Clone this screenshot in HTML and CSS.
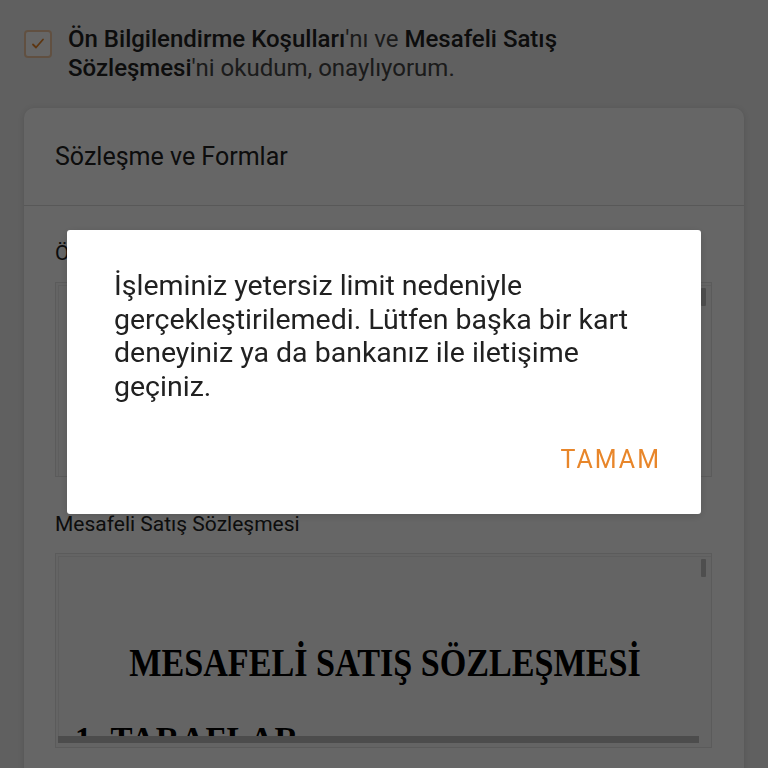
FILE: index.html
```html
<!DOCTYPE html>
<html lang="tr">
<head>
    <meta charset="UTF-8">
    <meta name="viewport" content="width=device-width, initial-scale=1.0">
    <title>Ödeme</title>
    <link rel="stylesheet" href="styles.css">
</head>
<body>

<div class="consent">
    <span class="check-box">
        <svg width="16" height="16" viewBox="0 0 16 16"><path d="M3 8.5l3 3 7-8" fill="none" stroke="#e8862a" stroke-width="1.8" stroke-linecap="round" stroke-linejoin="round"/></svg>
    </span>
    <p class="consent-text"><b>Ön Bilgilendirme Koşulları</b>'nı ve <b>Mesafeli Satış Sözleşmesi</b>'ni okudum, onaylıyorum.</p>
</div>

<div class="card">
    <div class="card-header">Sözleşme ve Formlar</div>
    <div class="card-body">
        <div class="doc-label">Ön Bilgilendirme Formu</div>
        <div class="doc-box">
            <div class="doc-frame"></div>
            <span class="scroll-v"></span>
        </div>

        <div class="doc-label">Mesafeli Satış Sözleşmesi</div>
        <div class="doc-box">
            <div class="doc-frame doc-frame-short">
                <h2 class="doc-title">MESAFELİ SATIŞ SÖZLEŞMESİ</h2>
                <h3 class="doc-section">1. TARAFLAR</h3>
            </div>
            <span class="scroll-v"></span>
            <span class="scroll-h"></span>
        </div>
    </div>
</div>

<div class="overlay">
    <div class="dialog">
        <p class="dialog-text">İşleminiz yetersiz limit nedeniyle gerçekleştirilemedi. Lütfen başka bir kart deneyiniz ya da bankanız ile iletişime geçiniz.</p>
        <div class="dialog-actions">
            <button class="dialog-btn">TAMAM</button>
        </div>
    </div>
</div>

</body>
</html>
```

FILE: styles.css
```css
body {
    font-family: Roboto, 'Noto Sans', sans-serif;
    background-color: #efefef;
    color: #333;
    margin: 0;
    padding: 0;
    height: 768px;
    overflow: hidden;
}
.consent {
    display: flex;
    align-items: flex-start;
    gap: 16px;
    padding: 25px 100px 0 24px;
}
.check-box {
    flex: none;
    width: 24px;
    height: 24px;
    margin-top: 5px;
    border: 2px solid #f2c9a2;
    border-radius: 4px;
    background: #fff;
    display: flex;
    align-items: center;
    justify-content: center;
}
.consent-text {
    margin: 0;
    font-size: 24px;
    line-height: 29px;
    color: #444;
}
.consent-text b {
    font-weight: 500;
    color: #222;
}
.card {
    margin: 25px 24px 0 24px;
    background: white;
    border-radius: 10px;
    box-shadow: 0 1px 6px rgba(0, 0, 0, 0.12);
    height: 700px;
}
.card-header {
    height: 97px;
    line-height: 98px;
    padding: 0 31px;
    font-size: 25px;
    color: #222;
    border-bottom: 1px solid #dcdcdc;
}
.card-body {
    padding: 0 32px 0 31px;
}
.doc-label {
    margin-top: 34px;
    font-size: 21px;
    line-height: 26px;
    color: #222;
}
.doc-box {
    position: relative;
    margin-top: 16px;
    height: 193px;
    border: 1px solid #e4e4e4;
    background: #fbfbfb;
    overflow: hidden;
}
.doc-frame {
    height: 100%;
    margin: 2px 0 0 2px;
    border-top: 1px solid #ececec;
    border-left: 1px solid #ececec;
    color: #000;
    font-family: 'Liberation Serif', serif;
    overflow: hidden;
}
.doc-frame-short {
    height: 179px;
}
.doc-title {
    margin: 84px 0 0 0;
    font-size: 39px;
    line-height: 44px;
    text-align: center;
    transform: scaleX(0.875);
}
.doc-section {
    margin: 36px 0 0 16px;
    font-size: 33px;
    line-height: 36px;
    letter-spacing: 1px;
}
.scroll-v {
    position: absolute;
    top: 5px;
    right: 5px;
    width: 5px;
    height: 18px;
    background: #c2c2c2;
    border-radius: 1px;
}
.scroll-h {
    position: absolute;
    left: 2px;
    right: 12px;
    bottom: 4px;
    height: 7px;
    background: #bdbdbd;
}
.overlay {
    position: fixed;
    inset: 0;
    background: rgba(0, 0, 0, 0.6);
    display: flex;
    justify-content: center;
    align-items: flex-start;
    padding-top: 230px;
}
.dialog {
    width: 634px;
    background: white;
    border-radius: 3px;
    box-shadow: 0 2px 8px rgba(0, 0, 0, 0.15);
    padding: 39px 40px 40px 47px;
    box-sizing: border-box;
}
.dialog-text {
    margin: 0;
    font-size: 28.5px;
    line-height: 33.5px;
    color: #212121;
}
.dialog-actions {
    display: flex;
    justify-content: flex-end;
    margin-top: 43px;
}
.dialog-btn {
    background: none;
    border: none;
    padding: 0;
    font-family: Roboto, sans-serif;
    font-size: 25px;
    line-height: 28px;
    letter-spacing: 2px;
    color: #e8862a;
    cursor: pointer;
}
```
